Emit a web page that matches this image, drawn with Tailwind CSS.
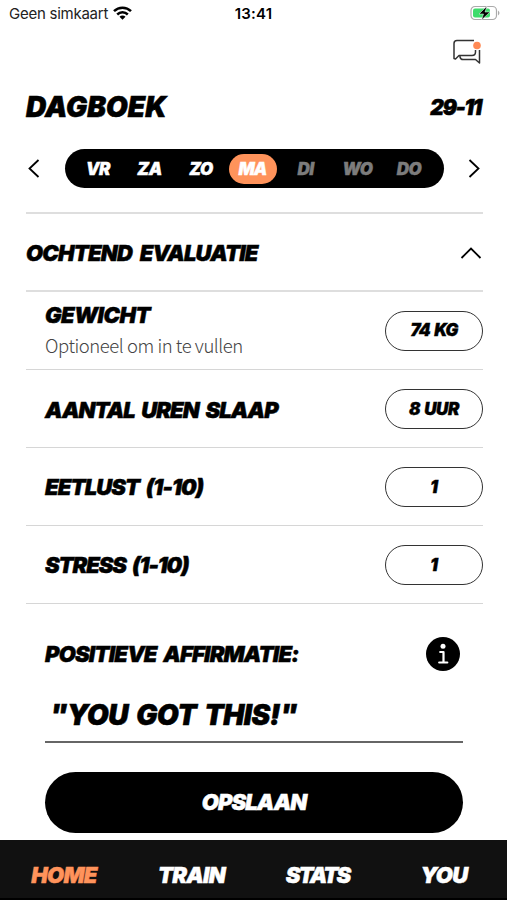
<!DOCTYPE html>
<html lang="nl">
<head>
    <meta charset="UTF-8">
    <meta name="viewport" content="width=device-width, initial-scale=1.0">
    <title>Dagboek</title>
    <script src="https://cdn.jsdelivr.net/npm/@tailwindcss/browser@4"></script>
</head>
<body class="bg-white text-black font-['Inter',sans-serif]">
    <div class="flex flex-col h-[900px] w-[507px] overflow-hidden whitespace-nowrap">
        <!-- Status bar -->
        <div class="h-7 grid grid-cols-3 items-center pl-[9px] pr-[7px] text-[15px] shrink-0">
            <div class="flex items-center gap-[5px] text-[#222]">
                <span class="tracking-[-0.25px]">Geen simkaart</span>
                <svg class="w-[19px] h-[14px] shrink-0 -mt-[2px]" viewBox="0 0 19 14" fill="none" stroke="#000" stroke-width="2.5">
                    <path d="M1 5.2A12.2 12.2 0 0 1 18 5.2"/>
                    <path d="M4.2 8.5A7.6 7.6 0 0 1 14.8 8.5"/>
                    <path d="M9.5 13.8L6.5 10.8A4.2 4.2 0 0 1 12.5 10.8Z" fill="#000" stroke="none"/>
                </svg>
            </div>
            <span class="text-center font-semibold tracking-[0.2px] -ml-[2px]">13:41</span>
            <svg class="w-[30px] h-[16px] justify-self-end -mt-[2px]" viewBox="0 0 30 16">
                <rect x="1" y="1.5" width="25.5" height="13" rx="4" fill="#fff" stroke="#aaa" stroke-width="1.2"/>
                <rect x="3" y="3.5" width="17" height="9" rx="2" fill="#3ddc6b"/>
                <path d="M28 5.5q3 2.500 0 5z" fill="#aaa"/>
                <path d="M17 1L9 9H13.500L11.500 15L20 7H15Z" fill="#000" stroke="#fff" stroke-width=".5"/>
            </svg>
        </div>

        <!-- Messages -->
        <div class="h-[46px] flex justify-end pr-[24px] pt-[10px] shrink-0">
            <svg class="w-[32px] h-[28px]" viewBox="0 0 32 28" fill="none" stroke="#333" stroke-width="1.5" stroke-linejoin="round">
                <path d="M23 2.500H6Q3 2.500 3 5.500V20.500L4.500 21L8 17.500H21Q24.500 17.500 24.500 14V12"/>
                <path d="M9 18V19Q9.500 21.500 12 21.500H24.500L28.500 25V12"/>
                <circle cx="26" cy="7.5" r="3.8" fill="#ff8a55" stroke="none"/>
            </svg>
        </div>

        <!-- Title -->
        <div class="h-[66px] flex items-center justify-between pl-[26px] pr-[24px] font-black italic shrink-0 [-webkit-text-stroke:0.6px]">
            <h1 class="text-[28px] tracking-[0.1px]">DAGBOEK</h1>
            <span class="text-[21px] tracking-[-1.2px] pr-[2px] pt-[2px]">29-11</span>
        </div>

        <!-- Day picker -->
        <div class="h-[72px] flex items-start justify-between pl-[28px] pr-[27px] pt-[9px] shrink-0">
            <svg class="w-[12px] h-[39px]" viewBox="0 0 12 39" fill="none" stroke="#000" stroke-width="1.8"><path d="M10.500 11L1.500 19.500L10.500 28"/></svg>
            <div class="w-[379px] h-[39px] bg-black rounded-full flex items-center pl-[8px] text-white text-[17px] font-black italic tracking-[-0.5px] text-center [-webkit-text-stroke:0.4px]">
                <span class="w-[51px] pt-[2px]">VR</span>
                <span class="w-[52px] pt-[2px]">ZA</span>
                <span class="w-[51px] pt-[2px]">ZO</span>
                <span class="w-[48px] h-[30px] leading-[31px] mx-[2px] rounded-full bg-[#ff935b] tracking-[-0.8px]">MA</span>
                <span class="w-[54px] pt-[2px] text-[#7c7c7c]">DI</span>
                <span class="w-[50px] pt-[2px] text-[#7c7c7c]">WO</span>
                <span class="w-[53px] pt-[2px] text-[#7c7c7c]">DO</span>
            </div>
            <svg class="w-[12px] h-[39px]" viewBox="0 0 12 39" fill="none" stroke="#000" stroke-width="1.8"><path d="M1.500 11L10.500 19.500L1.500 28"/></svg>
        </div>

        <!-- Morning evaluation -->
        <section class="ml-[26px] mr-[24px] flex flex-col shrink-0 text-[22px]">
            <div class="h-[78px] border-t-2 border-[#dedede] flex items-center justify-between pt-[3px]">
                <h2 class="font-black italic tracking-[-0.8px] [word-spacing:4px] [-webkit-text-stroke:0.5px]">OCHTEND EVALUATIE</h2>
                <svg class="w-[22px] h-[14px] mr-px -mt-[2px]" viewBox="0 0 22 14" fill="none" stroke="#000" stroke-width="1.8"><path d="M1.500 12L11 2.500L20.500 12"/></svg>
            </div>
            <div class="h-[79px] border-t-2 border-[#dedede] flex items-center justify-between pl-[19px]">
                <div class="-mt-[3px]">
                    <h3 class="font-black italic tracking-[-0.5px] leading-[32px] [-webkit-text-stroke:0.5px]">GEWICHT</h3>
                    <p class="font-['Noto_Sans_CJK_SC',sans-serif] font-light text-[18.500px] tracking-[-0.45px] leading-[28px] text-[#444]">Optioneel om in te vullen</p>
                </div>
                <button class="w-[98px] h-[40px] rounded-full border border-[#333] pt-px text-[17px] font-black italic tracking-[-0.9px] [word-spacing:2px] [-webkit-text-stroke:0.4px]">74 KG</button>
            </div>
            <div class="h-[78px] border-t border-[#d6d6d6] flex items-center justify-between pl-[19px] pt-px">
                <h3 class="font-black italic tracking-[-0.9px] [word-spacing:3px] pt-[2px] [-webkit-text-stroke:0.5px]">AANTAL UREN SLAAP</h3>
                <button class="w-[98px] h-[40px] rounded-full border border-[#333] pt-px text-[17px] font-black italic tracking-[-0.4px] [word-spacing:1px] [-webkit-text-stroke:0.4px]">8 UUR</button>
            </div>
            <div class="h-[78px] border-t border-[#d6d6d6] flex items-center justify-between pl-[19px]">
                <h3 class="font-black italic tracking-[-0.9px] [word-spacing:3px] pt-[2px] [-webkit-text-stroke:0.5px]">EETLUST (1-10)</h3>
                <button class="w-[98px] h-[40px] rounded-full border border-[#333] pt-[2px] text-[17px] font-black italic [-webkit-text-stroke:0.4px]">1</button>
            </div>
            <div class="h-[79px] border-y border-[#d6d6d6] flex items-center justify-between pl-[19px]">
                <h3 class="font-black italic tracking-[-1.1px] [word-spacing:3px] pt-[2px] [-webkit-text-stroke:0.5px]">STRESS (1-10)</h3>
                <button class="w-[98px] h-[40px] rounded-full border border-[#333] pt-[2px] text-[17px] font-black italic [-webkit-text-stroke:0.4px]">1</button>
            </div>
        </section>

        <!-- Affirmation -->
        <section class="pl-[45px] pr-[44px] pt-[32px] flex flex-col shrink-0">
            <div class="h-[36px] flex items-center justify-between pr-[3px]">
                <h2 class="text-[22px] font-black italic tracking-[-0.8px] [word-spacing:3px] [-webkit-text-stroke:0.5px]">POSITIEVE AFFIRMATIE:</h2>
                <svg class="w-[34px] h-[34px]" viewBox="0 0 34 34">
                    <circle cx="17" cy="17" r="17" fill="#000"/>
                    <circle cx="17" cy="9.2" r="2.5" fill="#fff"/>
                    <path d="M14.200 15H17.500V25M13.200 25.500H21.300" fill="none" stroke="#fff" stroke-width="2.2" stroke-linecap="round" stroke-linejoin="round"/>
                </svg>
            </div>
            <div class="h-[71px] border-b-2 border-[#666] pl-[5px] pt-[17px]">
                <span class="text-[28px] leading-[52px] font-black italic tracking-[-0.4px] [word-spacing:3px] [-webkit-text-stroke:0.6px]">"YOU GOT THIS!"</span>
            </div>
            <button class="mt-[29px] h-[61px] rounded-full bg-black text-white text-[22px] font-black italic tracking-[-0.9px] [-webkit-text-stroke:0.5px]">OPSLAAN</button>
        </section>

        <!-- Tabs -->
        <nav class="mt-auto h-[60px] bg-[#111] border-b-2 border-black flex items-center pt-[12px] text-white text-[22px] font-black italic tracking-[-0.7px] text-center shrink-0 [-webkit-text-stroke:0.5px]">
            <a class="w-[128px] text-[#ff935b]">HOME</a>
            <a class="w-[127px]">TRAIN</a>
            <a class="w-[125px] tracking-[-1.9px]">STATS</a>
            <a class="w-[127px] pl-px">YOU</a>
        </nav>
    </div>
</body>
</html>
